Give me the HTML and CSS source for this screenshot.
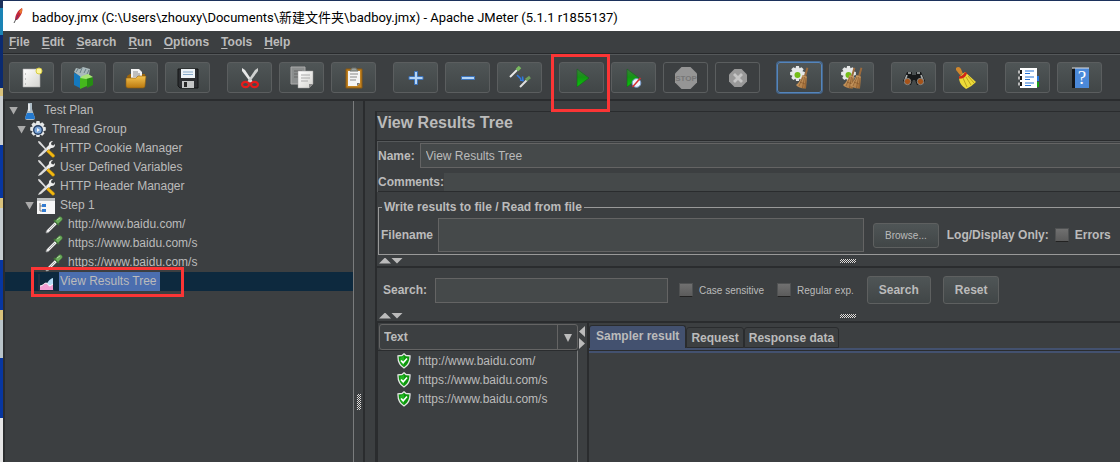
FILE: index.html
```html
<!DOCTYPE html>
<html lang="en">
<head>
    <meta charset="UTF-8">
    <meta name="viewport" content="width=device-width, initial-scale=1.0">
    <title>Apache JMeter (5.1.1 r1855137)</title>
    <link rel="stylesheet" href="styles.css">
</head>
<body>
    <!-- Shared icons -->
    <svg class="defs" aria-hidden="true">
        <defs>
            <linearGradient id="green" x1="0" y1="0" x2="0" y2="1"><stop offset="0" stop-color="#3f7d3f"/><stop offset=".45" stop-color="#149414"/><stop offset="1" stop-color="#08c808"/></linearGradient>
            <linearGradient id="gold" x1="0" y1="0" x2="0" y2="1"><stop offset="0" stop-color="#f5c34f"/><stop offset="1" stop-color="#b9780f"/></linearGradient>
            <linearGradient id="paper" x1="0" y1="0" x2="1" y2="1"><stop offset="0" stop-color="#fff"/><stop offset="1" stop-color="#d4d4d0"/></linearGradient>
            <linearGradient id="straw" x1="0" y1="0" x2="1" y2="1"><stop offset="0" stop-color="#d6ac75"/><stop offset="1" stop-color="#a56d35"/></linearGradient>
        </defs>
        <symbol id="tools" viewBox="0 0 18 18">
            <path d="M1 17 2 15 9 8l2 2-7 6z" fill="#ddd"/>
            <path d="M9 8l3-3c-.5-2 1-4 4-4l-2 2 .5 2 2 .5 1.500-1.500c.3 2.500-1.500 4.500-4 4l-3 3z" fill="#eee"/>
            <path d="M1 1l2 .5 7 8-1 1L1.500 3z" fill="#dedede"/>
            <path d="M9.500 11.500l2-2 6 5.500c.5 1.500-.5 2.500-2 2.200z" fill="#f2b911" stroke="#c28a08" stroke-width=".5"/>
        </symbol>
        <symbol id="dropper" viewBox="0 0 18 18">
            <path d="M1 17c0-2 1-3 2-4l7-7 2 2-7 7c-1 1-2 2-4 2z" fill="#f2f2f2" stroke="#8a8d8d" stroke-width=".7"/>
            <path d="M4 14l6-6" stroke="#a8aaaa"/>
            <path d="M9 4l5 5" stroke="#3e6d37" stroke-width="2"/>
            <path d="M10 5l4-4c2-1 4 1 3 3l-4 4z" fill="#6cab5d" stroke="#487d3d" stroke-width=".6"/>
            <path d="M12 4l3-2" stroke="#b5dba6"/>
        </symbol>
        <symbol id="shield" viewBox="0 0 14 16">
            <path d="M7 .8 9 2.500l4 .3c.3 6-1.200 9.500-6 12.200C2.200 12.300.7 8.800 1 2.800l4-.3z" fill="#0c960c" stroke="#e4e4e4" stroke-width="1.300"/>
            <path d="M7 3v10c-3-2-4-4-4-8z" fill="#22b522"/>
            <path d="M4 7.500 6.200 9.700 10 5.500" fill="none" stroke="#fff" stroke-width="1.700"/>
        </symbol>
        <symbol id="gear" viewBox="1 1 18 18">
            <path d="M8.500 1h3l.6 2.500 2.200-1.300 2.200 2.200-1.300 2.200 2.600.7v3.300l-2.600.7 1.300 2.300-2.200 2.200-2.200-1.300-.6 2.500h-3l-.6-2.500-2.300 1.300-2.200-2.200 1.300-2.300-2.500-.7V7.300l2.500-.7-1.300-2.200 2.200-2.200 2.300 1.300z" fill="#e6e8e8"/>
        </symbol>
        <symbol id="broom" viewBox="0 0 14 24">
            <path d="M9 10 11.500 1.500l1.800.5L11 11z" fill="#9b6a3c"/>
            <path d="M7.500 9l4.500 1.500-1 12c-4 .5-8-1-10-3.500 3-2 5-6 6.500-10z" fill="url(#straw)"/>
            <path d="M8 11 4 20m5.500-9-2 11m3.500-10-1 10M5 16l5 2" stroke="#7d5027" stroke-width=".6"/>
        </symbol>
    </svg>

    <div class="window">
        <header class="titlebar">
            <svg width="12" height="18" viewBox="0 0 12 18"><path d="M3 13C3 8 6 3 10 1c1 2 0 7-5 12z" fill="#c62839"/><path d="M7 5c1-2 2-3 3-4 .5 2 0 4-1 6z" fill="#e9782e"/><path d="M4 13 6 8" stroke="#772a72"/><path d="M2 16l2-4" stroke="#555"/></svg>
            <h1>badboy.jmx (C:\Users\zhouxy\Documents\新建文件夹\badboy.jmx) - Apache JMeter (5.1.1 r1855137)</h1>
        </header>

        <nav class="menubar">
            <button><u>F</u>ile</button>
            <button><u>E</u>dit</button>
            <button><u>S</u>earch</button>
            <button><u>R</u>un</button>
            <button><u>O</u>ptions</button>
            <button><u>T</u>ools</button>
            <button><u>H</u>elp</button>
        </nav>

        <div class="toolbar">
            <div class="group">
                <button aria-label="New"><svg viewBox="0 0 24 24"><path d="M3 3h17v18H3z" fill="url(#paper)" stroke="#aaa" stroke-width=".6"/><path d="M5 8h1m-1 5h1m-1 5h1" stroke="#999"/><circle cx="19" cy="5" r="3" fill="#fdf6a0" stroke="#d8cc42"/></svg></button>
                <button aria-label="Templates"><svg viewBox="0 0 24 24"><path d="M2 7l6 2v13l-6-3z" fill="#1579bd"/><path d="M8 9l6-2v12l-6 3z" fill="#37a8dd"/><path d="M2 6 4 2l4 1 3-2 7 2-1 6-8 2z" fill="#aab9bb"/><path d="M4 6l2-3m2 4 2-5m2 5 2-4m1 5 2-4" stroke="#687d85"/><path d="M8 12l7-3v11l-7 3z" fill="#45b81d"/><path d="M15 9l6 3v7l-6 3z" fill="#268d13"/><path d="M8 12l2-2 6-2 5 3-7 2z" fill="#a8e476"/></svg></button>
                <button aria-label="Open"><svg viewBox="0 0 24 24"><path d="M3 10l3-2h15v13H4z" fill="#9b650d"/><path d="M7 3h8l3 3v9H7z" fill="#f4f4f4"/><path d="M9 6h5m-5 2h7m-7 2h7" stroke="#888"/><path d="M2 12h10l2-2h8l-1 10c0 1-1 2-2 2H4c-1 0-2-1-2-2z" fill="url(#gold)" stroke="#8a5c10" stroke-width=".6"/></svg></button>
                <button aria-label="Save"><svg viewBox="0 0 24 24"><path d="M2 3h20v19H4l-2-2z" fill="#2d2f32" stroke="#151617"/><path d="M5 3h14v9H5z" fill="#eef3f7"/><path d="M7 6h10M7 8.500h10" stroke="#86a9c9"/><path d="M6 15h12v7H6z" fill="#c5c7c7"/><path d="M8 16h3v5H8z" fill="#292929"/></svg></button>
            </div>
            <div class="group">
                <button aria-label="Cut"><svg viewBox="0 0 24 24"><path d="M4 2l3 2 8 12-2 1L4 5z" fill="#e8e8e8"/><path d="M20 2l-3 2-8 12 2 1 9-12z" fill="#cfd1d0"/><ellipse cx="7.500" cy="18.500" rx="3.500" ry="2.700" fill="none" stroke="#e51b1b" stroke-width="2.200"/><ellipse cx="16.500" cy="18.500" rx="3.500" ry="2.700" fill="none" stroke="#e51b1b" stroke-width="2.200"/></svg></button>
                <button aria-label="Copy"><svg viewBox="0 0 24 24"><path d="M1 1h14v17H1z" fill="#8b8e8e" stroke="#aaa"/><path d="M4 5h8M4 8h8M4 11h8" stroke="#666"/><path d="M8 5h15v13l-4 4H8z" fill="url(#paper)" stroke="#999" stroke-width=".5"/><path d="M11 9h9m-9 3h9m-9 3h7" stroke="#aaa"/><path d="M19 22v-4h4z" fill="#888"/></svg></button>
                <button aria-label="Paste"><svg viewBox="0 0 24 24"><path d="M4 3h16v19H4z" fill="#c28220" stroke="#8a5910"/><path d="M6 5h12v12l-3 3H6z" fill="#f4f4f4"/><path d="M8 5c0-2 2-1 2-3h4c0 2 2 1 2 3z" fill="#9ca19b" stroke="#6c716c"/><path d="M8 8h8m-8 3h7m-7 3h6" stroke="#888"/><path d="M15 20v-3h3z" fill="#777"/></svg></button>
            </div>
            <div class="group">
                <button aria-label="Expand all"><svg viewBox="0 0 24 24"><path d="M10.500 5.500h3v5H19v3h-5.500v5h-3v-5H5v-3h5.500z" fill="#b5d5f6" stroke="#3c73ba"/></svg></button>
                <button aria-label="Collapse all"><svg viewBox="0 0 24 24"><path d="M5.500 10.500h13v3h-13z" fill="#b5d5f6" stroke="#3c73ba"/></svg></button>
                <button aria-label="Toggle"><svg viewBox="0 0 24 24"><path d="M2 11 9 4" stroke="#e8e8e8" stroke-width="2"/><path d="M9 4l3-3" stroke="#79b95f" stroke-width="3.500"/><path d="M12 21l7-7" stroke="#dedede" stroke-width="2"/><path d="M18 14l4-3" stroke="#6f9e5b" stroke-width="3"/><path d="M9 9l4 4m-1 1 3 .5-.5-4" fill="none" stroke="#2f78e0" stroke-width="1.600"/></svg></button>
            </div>
            <div class="group">
                <button aria-label="Start"><svg viewBox="0 0 24 24"><path d="M7 3 19 12 7 21z" fill="url(#green)" stroke="#14651b" stroke-width=".6"/></svg></button>
                <button aria-label="Start no pauses"><svg viewBox="0 0 24 24"><path d="M5 3 17 12 5 21z" fill="url(#green)" stroke="#14651b" stroke-width=".6"/><circle cx="14.500" cy="17" r="4.300" fill="#eef3fb" stroke="#7da1d2"/><path d="M10.500 21l8-9" stroke="#d52f2f" stroke-width="1.500"/></svg></button>
                <button aria-label="Stop" disabled><svg viewBox="0 0 24 24"><path d="M7.500 1h9L23 7.500v9L16.500 23h-9L1 16.500v-9z" fill="#959595"/><text x="12" y="15" text-anchor="middle" class="stop-text">STOP</text></svg></button>
                <button aria-label="Shutdown" disabled><svg viewBox="0 0 24 24"><path d="M8.500 3h7L21 8.500v7L15.500 21h-7L3 15.500v-7z" fill="#999"/><path d="M8 8l8 8m0-8-8 8" stroke="#c5c5c5" stroke-width="2.800"/></svg></button>
            </div>
            <div class="group">
                <button aria-label="Clear" class="focused"><svg viewBox="0 0 24 24"><use href="#gear" x="1" width="17" height="17"/><circle cx="9.500" cy="9" r="3" fill="#74bd18"/><use href="#broom" x="7" width="14" height="24"/></svg></button>
                <button aria-label="Clear all"><svg viewBox="0 0 24 24"><use href="#gear" width="17" height="17"/><circle cx="8.500" cy="9" r="3" fill="#74bd18"/><use href="#broom" x="2" width="14" height="24"/><use href="#broom" x="9" width="14" height="24"/></svg></button>
            </div>
            <div class="group">
                <button aria-label="Search"><svg viewBox="0 0 24 24"><path d="M5 6h5v3h4V6h5l4 9-3 4h-5l-2-5h-2l-2 5H4l-3-4z" fill="#17191a"/><path d="M6 7h3m6 0h3M5 9l-2 5m16-5 2 5" stroke="#aeb2b2" stroke-width="1.600"/><circle cx="5.500" cy="15.500" r="3.200" fill="#a65319" stroke="#858a8a"/><circle cx="18.500" cy="15.500" r="3.200" fill="#a65319" stroke="#858a8a"/></svg></button>
                <button aria-label="Reset search"><svg viewBox="0 0 24 24"><path d="M2 2c2-2 4-1 5 1l2 5-3 1-4-5z" fill="#cf872d"/><path d="M6 10l5-4 11 10c-3 3-6 5-10 7C8 20 5 17 5 11z" fill="#edda38"/><path d="M9 12l4 9m-1-10 5 8m-3-9 6 7" stroke="#ad9417" stroke-width=".8"/><path d="M5 11.500c3 0 6-2 7-5" fill="none" stroke="#d12719" stroke-width="2.500"/></svg></button>
            </div>
            <div class="group">
                <button aria-label="Function helper"><svg viewBox="0 0 24 24"><path d="M4 2h17v20H4z" fill="#fff"/><path d="M21 10h2v5h-2z" fill="#287ae0"/><path d="M21 16h2v5h-2z" fill="#16a116"/><path d="M2 6h4M2 12h4M2 18h4" stroke="#bbb" stroke-width="3"/><path d="M5 4v4m0 2v4m0 2v4" stroke="#181818" stroke-width="2"/><path d="M9 5h9M9 7.500h5M9 11h9m-9 2.500h5M9 17h9m-9 2.500h6" stroke="#2774d5" stroke-width="1.200"/></svg></button>
                <button aria-label="Help"><svg viewBox="0 0 24 24"><path d="M4 3l3-1v20H4z" fill="#151719"/><path d="M7 2h14v20H7z" fill="#4b89d9"/><path d="M4 2h17" stroke="#ddd"/><text x="14" y="18" text-anchor="middle" class="help-text">?</text></svg></button>
            </div>
        </div>

        <main class="content">
            <aside class="tree">
                <ul>
                    <li><i class="toggle"></i><svg width="18" height="18" viewBox="0 0 18 18"><path d="M7 1h4v6l3 9c0 1-1 2-2 2H6c-1 0-2-1-2-2l3-9z" fill="#aebdc7"/><path d="M6 11h6l2 5c0 1-1 1-2 1H6c-1 0-2 0-2-1z" fill="#2379cf"/><path d="M8 2v7" stroke="#f4f4f4" stroke-width="1.500"/></svg><span>Test Plan</span></li>
                    <li class="level-1"><i class="toggle"></i><svg width="18" height="18" viewBox="0 0 18 18"><use href="#gear" width="18" height="18"/><circle cx="9" cy="9" r="5" fill="#253e63"/><circle cx="9" cy="9" r="3.600" fill="#7aa5d8"/><path d="M8 7v4l3-2z" fill="#f5f5f5"/></svg><span>Thread Group</span></li>
                    <li class="level-2"><svg width="18" height="18"><use href="#tools"/></svg><span>HTTP Cookie Manager</span></li>
                    <li class="level-2"><svg width="18" height="18"><use href="#tools"/></svg><span>User Defined Variables</span></li>
                    <li class="level-2"><svg width="18" height="18"><use href="#tools"/></svg><span>HTTP Header Manager</span></li>
                    <li class="level-2 branch"><i class="toggle"></i><svg width="18" height="18" viewBox="0 0 18 18"><path d="M0 1h18v16H0z" fill="#f7f7f7"/><path d="M0 1h18v3H0z" fill="#bcbfc0"/><path d="M3 6v8h3M3 9h3" fill="none" stroke="#777"/><path d="M5 7h4v3H5zm0 5h4v3H5z" fill="#327bd0"/></svg><span>Step 1</span></li>
                    <li class="level-3"><svg width="18" height="18"><use href="#dropper"/></svg><span>http://www.baidu.com/</span></li>
                    <li class="level-3"><svg width="18" height="18"><use href="#dropper"/></svg><span>https://www.baidu.com/s</span></li>
                    <li class="level-3"><svg width="18" height="18"><use href="#dropper"/></svg><span>https://www.baidu.com/s</span></li>
                    <li class="level-2 selected"><svg width="18" height="18" viewBox="0 0 18 18"><path d="M2 1v16h15" fill="none" stroke="#333845"/><path d="M8 16c1-5 4-10 8-11v11z" fill="#b7dcf7"/><path d="M3 17v-4c3 0 4-3 6-3 2 0 2 3 4 3l3-2v6z" fill="#f19ed2"/><path d="M3 13c3 0 4-3 6-3 2 0 2 3 4 3l3-2" fill="none" stroke="#fff"/></svg><span>View Results Tree</span></li>
                </ul>
            </aside>
            <div class="splitter"><i class="grip"></i></div>

            <section class="panel">
                <h2>View Results Tree</h2>
                <div class="details">
                    <div class="row">
                        <label for="name">Name:</label>
                        <input type="text" id="name" value="View Results Tree">
                    </div>
                    <div class="row comments">
                        <label for="comments">Comments:</label>
                        <input type="text" id="comments">
                    </div>
                </div>
                <fieldset>
                    <legend>Write results to file / Read from file</legend>
                    <label for="filename">Filename</label>
                    <input type="text" id="filename">
                    <button class="button small">Browse...</button>
                    <span class="log">Log/Display Only:</span>
                    <label class="check"><input type="checkbox">Errors</label>
                </fieldset>
                <div class="divider"><i class="up"></i><i class="down"></i><i class="grip wide"></i></div>

                <div class="search">
                    <label for="search">Search:</label>
                    <input type="text" id="search">
                    <label class="check small"><input type="checkbox">Case sensitive</label>
                    <label class="check small"><input type="checkbox">Regular exp.</label>
                    <button class="button">Search</button>
                    <button class="button">Reset</button>
                </div>
                <div class="divider"><i class="up"></i><i class="down"></i><i class="grip wide"></i></div>

                <div class="results">
                    <div class="samples">
                        <div class="combo">
                            <select aria-label="Renderer"><option>Text</option></select>
                            <i class="down"></i>
                        </div>
                        <ul>
                            <li><svg width="14" height="16"><use href="#shield"/></svg>http://www.baidu.com/</li>
                            <li><svg width="14" height="16"><use href="#shield"/></svg>https://www.baidu.com/s</li>
                            <li><svg width="14" height="16"><use href="#shield"/></svg>https://www.baidu.com/s</li>
                        </ul>
                    </div>
                    <div class="side-arrows"><i class="left"></i><i class="right"></i></div>
                    <div class="output">
                        <div class="tabs">
                            <button class="active">Sampler result</button>
                            <button>Request</button>
                            <button>Response data</button>
                        </div>
                    </div>
                </div>
            </section>
        </main>
    </div>

    <!-- Red marks over the window -->
    <div class="mark mark-start"></div>
    <div class="mark mark-tree"></div>
</body>
</html>
```
FILE: styles.css
```css
* {
    box-sizing: border-box;
}

body {
    margin: 0;
    height: 100vh;
    padding: 1px 0 0 3px;
    overflow: hidden;
    background: linear-gradient(#1c315c 0 8px, #1a83b5 8px 35px, #0b2a70 35px 88px, #d9c27c 88px 96px, #c9cdd0 96px 145px, #0736a0 145px 198px, #d9c27c 198px 208px, #c5ccd0 208px 260px, #0736a0 260px 310px, #d9c27c 310px 320px, #b9c4c9 320px 358px, #0736a0 358px 418px, #e5e5e5 418px);
    color: #bbb;
    font: 12px "Liberation Sans", Arial, sans-serif;
}

button, input, select {
    font: inherit;
    color: inherit;
}

ul {
    list-style: none;
    margin: 0;
    padding: 0;
}

.defs {
    position: absolute;
    width: 0;
    height: 0;
}

.window {
    display: flex;
    flex-direction: column;
    height: 100%;
    background: #3c3f41;
}

/* Title and menu */
.titlebar {
    display: flex;
    align-items: center;
    gap: 8px;
    height: 30px;
    flex: none;
    padding-left: 9px;
    background: #fff;
    color: #000;
}

.titlebar h1 {
    margin: 0;
    font: 13px Roboto, "Noto Sans CJK SC", sans-serif;
    white-space: nowrap;
}

.menubar {
    display: flex;
    gap: 12px;
    height: 23px;
    flex: none;
    padding: 0 6px;
    border-bottom: 1px solid #282a2c;
}

.menubar button {
    padding: 0;
    border: 0;
    background: none;
    font-weight: bold;
}

.menubar u {
    text-underline-offset: 2px;
}

/* Toolbar */
.toolbar {
    display: flex;
    gap: 17px;
    flex: none;
    padding: 7px 6px 6px;
    border-top: 1px solid #55585a;
    border-bottom: 2px solid #2a2c2e;
}

.group {
    display: flex;
    gap: 7px;
}

.toolbar button {
    display: flex;
    align-items: center;
    justify-content: center;
    width: 45px;
    height: 31px;
    padding: 0;
    border: 1px solid #5b5e5f;
    border-radius: 3px;
    background: linear-gradient(#4f5556, #414647);
}

.toolbar button:disabled {
    background: none;
}

.toolbar button.focused {
    border-color: #5585bb;
    box-shadow: 0 0 0 1px #45678e;
}

.toolbar svg {
    width: 24px;
    height: 24px;
    flex: none;
}

.stop-text {
    font-size: 8px;
    font-weight: bold;
    fill: #777;
}

.help-text {
    font-family: "Liberation Serif", serif;
    font-size: 19px;
    fill: #fff;
}

/* Test plan tree */
.content {
    display: flex;
    flex: 1;
    min-height: 0;
}

.tree {
    width: 351px;
    flex: none;
    border-left: 2px solid #2a2c2e;
    border-right: 1px solid #7a7c7d;
}

.tree li {
    display: flex;
    align-items: center;
    gap: 5px;
    height: 19px;
    padding-left: 4px;
}

.tree li span {
    height: 19px;
    padding: 0 3px 0 1px;
    line-height: 18px;
    margin-left: -1px;
}

.tree .level-1 {
    padding-left: 12px;
}

.tree .level-2 {
    padding-left: 32px;
}

.tree .branch {
    padding-left: 20px;
}

.tree .level-3 {
    padding-left: 40px;
}

.tree .selected {
    background: #0d293e;
}

.tree .selected span {
    background: #4b6eaf;
}

.toggle {
    width: 9px;
    height: 8px;
    margin-right: -2px;
    background: #aaa;
    clip-path: polygon(0 0, 100% 0, 50% 100%);
}

.splitter {
    display: flex;
    align-items: center;
    justify-content: center;
    width: 11px;
    flex: none;
    padding-top: 240px;
    border-right: 2px solid #2a2c2e;
}

.grip {
    width: 4px;
    height: 16px;
    background: repeating-conic-gradient(#ddd 0 25%, #333 0 50%) 0 0 / 2px 2px;
}

.grip.wide {
    width: 16px;
    height: 4px;
}

/* Right panel */
.panel {
    display: flex;
    flex-direction: column;
    flex: 1;
    min-width: 0;
    margin: 10px 0 0 10px;
    border-top: 1px solid #2a2c2e;
    border-left: 2px solid #2a2c2e;
}

.panel h2 {
    margin: 0;
    height: 29px;
    border-bottom: 1px solid #2a2c2e;
    font-size: 16px;
    line-height: 22px;
}

.panel label, legend, .log {
    font-weight: bold;
    white-space: nowrap;
}

input[type="text"] {
    border: 1px solid #646464;
    background: #45494a;
    padding: 0 5px;
    min-width: 0;
}

.details {
    padding-top: 1px;
    border: solid #55585a;
    border-width: 1px 0 0 1px;
}

.row {
    display: flex;
    align-items: center;
    gap: 5px;
}

.row input {
    flex: 1;
    height: 25px;
    border-right: 0;
}

.comments {
    gap: 0;
    padding-top: 5px;
    border-bottom: 1px solid #2a2c2e;
}

.comments input {
    height: 18px;
    border: 0;
}

fieldset {
    display: flex;
    align-items: center;
    min-width: 0;
    margin: 8px 0 0 1px;
    padding: 4px 0 2px 2px;
    border: 1px solid #999;
    border-right: 0;
}

legend {
    margin-left: 1px;
    padding: 0 2px;
    line-height: 14px;
}

fieldset input[type="text"] {
    flex: 0 1 426px;
    height: 34px;
    margin: 0 9px 0 5px;
}

.button {
    height: 28px;
    padding: 0 11px;
    border: 1px solid #5e6060;
    border-radius: 3px;
    background: linear-gradient(#4f5556, #414647);
    font-weight: bold;
}

.button.small {
    height: 25px;
    font-size: 10px;
    font-weight: normal;
}

.log {
    margin: 0 6px 0 8px;
}

.check {
    display: flex;
    align-items: center;
    gap: 6px;
}

.panel .check.small {
    font-size: 10px;
    font-weight: normal;
}

.check input {
    appearance: none;
    width: 14px;
    height: 14px;
    margin: 0;
    border: 1px solid #505253;
    border-bottom-color: #222;
    background: linear-gradient(#707070, #5b5b5b);
}

.divider {
    display: flex;
    align-items: center;
    height: 13px;
    flex: none;
    padding-left: 2px;
    border-bottom: 2px solid #2a2c2e;
}

.divider .grip {
    margin-left: 59%;
}

.up, .down {
    width: 12px;
    height: 6px;
    background: #bbb;
    clip-path: polygon(50% 0, 100% 100%, 0 100%);
}

.down {
    clip-path: polygon(0 0, 100% 0, 50% 100%);
}

.search {
    display: flex;
    align-items: center;
    height: 42px;
    flex: none;
    padding: 2px 0 0 6px;
}

.search input[type="text"] {
    flex: 0 1 233px;
    height: 25px;
    margin: 0 11px 0 8px;
}

.search .check {
    margin-right: 13px;
}

.search .button + .button {
    margin-left: 12px;
}

/* Results */
.results {
    display: flex;
    flex: 1;
    min-height: 0;
}

.samples {
    display: flex;
    flex-direction: column;
    width: 201px;
    flex: none;
    padding-top: 1px;
    border-left: 1px solid #2a2c2e;
}

.combo {
    display: flex;
    position: relative;
    padding-left: 1px;
}

.combo select {
    appearance: none;
    width: 100%;
    height: 26px;
    padding: 0 4px;
    border: 1px solid #646464;
    border-radius: 3px;
    background: linear-gradient(#646464, #646464) right 19px top 0 / 1px 100% no-repeat #3c3f41;
    font-weight: bold;
}

.combo .down {
    position: absolute;
    right: 6px;
    top: 10px;
    width: 8px;
    height: 8px;
    pointer-events: none;
}

.samples ul {
    flex: 1;
    border-top: 1px solid #2a2c2e;
    border-right: 1px solid #7a7c7d;
}

.samples li {
    display: flex;
    align-items: center;
    gap: 7px;
    height: 19px;
    padding-left: 19px;
}

.side-arrows {
    display: flex;
    flex-direction: column;
    gap: 1px;
    width: 11px;
    flex: none;
    padding: 3px 0 0 1px;
    border-right: 2px solid #2a2c2e;
}

.left, .right {
    width: 6px;
    height: 11px;
    background: #bbb;
    clip-path: polygon(100% 0, 100% 100%, 0 50%);
}

.right {
    clip-path: polygon(0 0, 100% 50%, 0 100%);
}

.output {
    flex: 1;
    padding-top: 1px;
}

/* The tab strip stands on two blue lines with a dark one between */
.tabs {
    display: flex;
    align-items: flex-end;
    height: 29px;
    padding-bottom: 5px;
    background: linear-gradient(to top, #43516f 2px, #2a2c2e 2px 3px, #43516f 3px 5px, transparent 5px);
}

.tabs button {
    height: 21px;
    padding: 0 4px;
    border: 1px solid #2a2c2e;
    border-radius: 3px 3px 0 0;
    background: none;
    font-weight: bold;
}

.tabs .active {
    height: 23px;
    padding: 0 6px 2px;
    border-bottom: 0;
    background: #43516f;
}

.mark {
    position: absolute;
    border: 3px solid #fb3535;
    pointer-events: none;
}

.mark-start {
    left: 551px;
    top: 54px;
    width: 59px;
    height: 58px;
}

.mark-tree {
    left: 31px;
    top: 267px;
    width: 153px;
    height: 30px;
}
```
